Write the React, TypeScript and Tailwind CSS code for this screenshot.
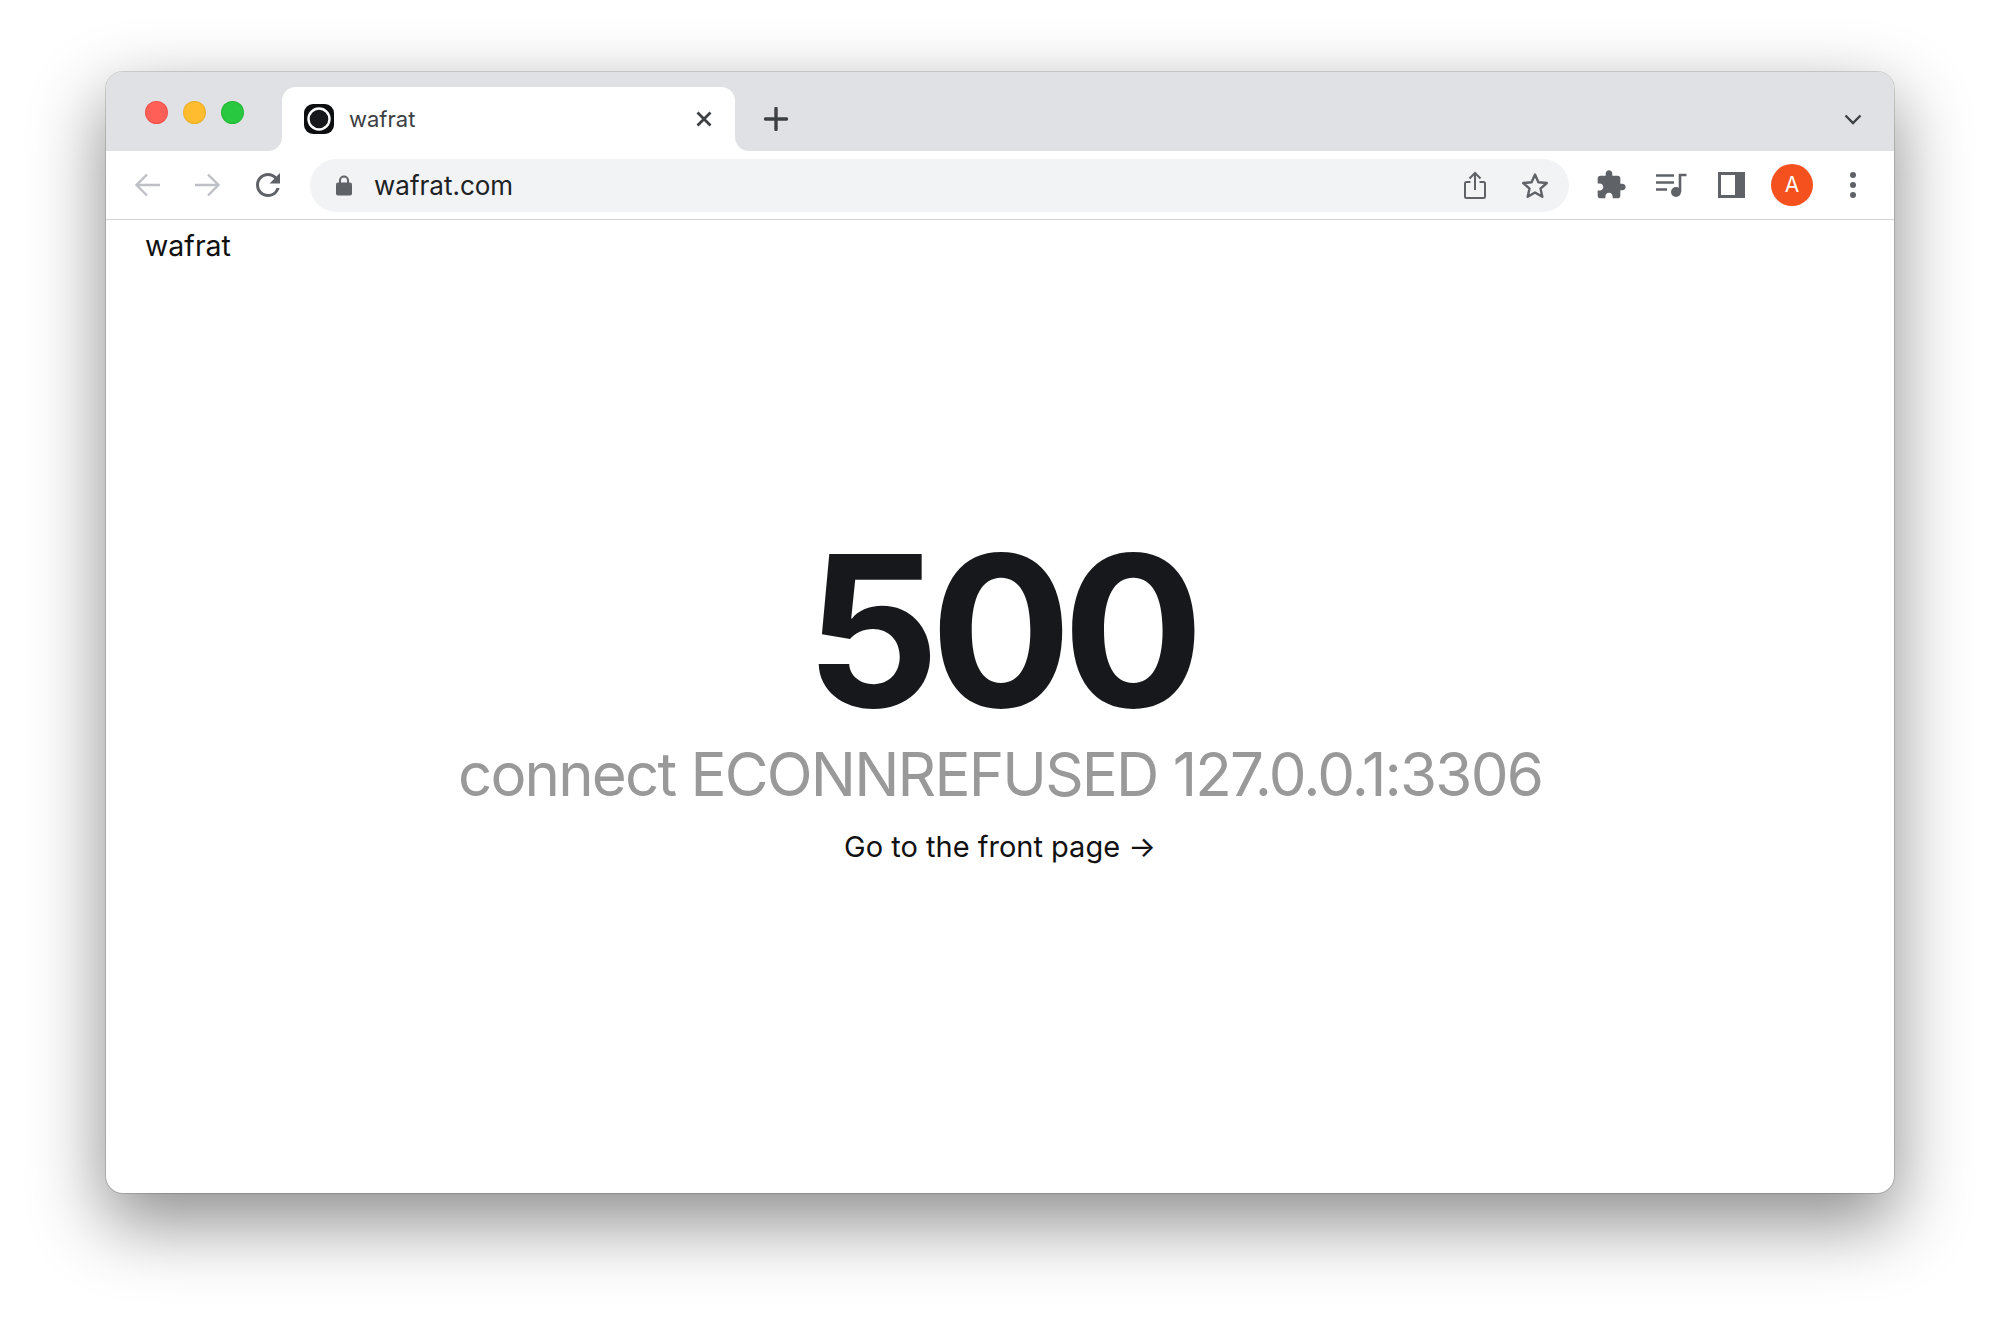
import React from 'react';

const TabCorner = ({ side }: { side: 'left' | 'right' }) => (
  <span
    className={
      side === 'left'
        ? 'absolute bottom-0 -left-[14px] w-[14px] h-[14px] bg-white'
        : 'absolute bottom-0 -right-[14px] w-[14px] h-[14px] bg-white'
    }
  >
    <span
      className={
        side === 'left'
          ? 'block w-full h-full bg-[#dfe1e5] rounded-br-[14px]'
          : 'block w-full h-full bg-[#dfe1e5] rounded-bl-[14px]'
      }
    />
  </span>
);

const TabBar = () => (
  <div className="flex items-end h-[79px] bg-[#dfe1e5] rounded-t-[17px] shrink-0">
    {/* Traffic lights */}
    <div className="flex items-center gap-[15px] w-[176px] pl-[39px] self-start pt-[29px]">
      <span className="w-[23px] h-[23px] rounded-full bg-[#ff5f57] border border-[#e0443e]/50" />
      <span className="w-[23px] h-[23px] rounded-full bg-[#febc2e] border border-[#dea123]/50" />
      <span className="w-[23px] h-[23px] rounded-full bg-[#28c840] border border-[#1aab29]/50" />
    </div>

    {/* Active tab */}
    <div className="relative flex items-center w-[453px] h-[64px] bg-white rounded-t-[14px] pl-[22px] pr-[23px]">
      <TabCorner side="left" />
      <TabCorner side="right" />
      <svg width="30" height="30" viewBox="0 0 30 30" className="shrink-0">
        <rect width="30" height="30" rx="9" fill="#0d0e10" />
        <circle cx="15" cy="15" r="10.5" fill="#17181c" stroke="#ffffff" strokeWidth="2.4" />
      </svg>
      <span className="ml-[15px] text-[22px] text-[#3c4043] font-['Inter',sans-serif]">wafrat</span>
      <svg width="16" height="16" viewBox="0 0 16 16" className="ml-auto">
        <path d="M1.5 1.5l13 13M14.5 1.5l-13 13" stroke="#3c4043" strokeWidth="2.8" fill="none" />
      </svg>
    </div>

    <div className="self-center flex items-center justify-center ml-[29px] mt-[15px]">
      <svg width="24" height="24" viewBox="0 0 24 24">
        <path d="M12 1.5v21M1.5 12h21" stroke="#3c4043" strokeWidth="3.4" strokeLinecap="round" fill="none" />
      </svg>
    </div>

    <div className="ml-auto mr-[32px] self-center mt-[16px]">
      <svg width="18" height="11" viewBox="0 0 18 11" className="block">
        <path d="M1.5 1.5L9 9l7.5-7.5" stroke="#3c4043" strokeWidth="2.4" fill="none" />
      </svg>
    </div>
  </div>
);

const Toolbar = () => (
  <div className="flex items-center h-[69px] pl-[28px] pr-[31px] bg-white border-b border-[#d3d4d6] shrink-0">
    <svg width="27" height="26" viewBox="0 0 27 26" className="shrink-0">
      <path d="M26 13H3M13 2.5L2.5 13 13 23.5" stroke="#bdc0c4" strokeWidth="2.4" fill="none" />
    </svg>
    <svg width="27" height="26" viewBox="0 0 27 26" className="ml-[33px] shrink-0">
      <path d="M1 13h23M14 2.5L24.5 13 14 23.5" stroke="#bdc0c4" strokeWidth="2.4" fill="none" />
    </svg>
    <svg width="36" height="36" viewBox="0 0 24 24" className="ml-[29px] shrink-0" fill="#5f6368">
      <path d="M17.65 6.35A7.958 7.958 0 0 0 12 4c-4.42 0-7.99 3.58-7.99 8s3.57 8 7.99 8c3.73 0 6.84-2.55 7.73-6h-2.08A5.99 5.99 0 0 1 12 18c-3.31 0-6-2.69-6-6s2.69-6 6-6c1.66 0 3.14.69 4.22 1.78L13 11h7V4l-2.35 2.35z" />
    </svg>

    {/* Omnibox */}
    <div className="flex items-center ml-[24px] w-[1259px] h-[53px] rounded-full bg-[#f1f3f4] pl-[26px] pr-[19px] shrink-0">
      <svg width="16" height="21" viewBox="0 0 16 21" className="shrink-0">
        <path d="M4 9V5.5a4 4 0 0 1 8 0V9" stroke="#5f6368" strokeWidth="2" fill="none" />
        <rect y="7.5" width="16" height="13" rx="2" fill="#5f6368" />
      </svg>
      <span className="ml-[22px] pt-[1px] text-[26px] text-[#202124] font-['Inter',sans-serif]">wafrat.com</span>
      <svg width="24" height="29" viewBox="0 0 24 29" className="ml-auto shrink-0">
        <path
          d="M7.5 11H3.5a1.5 1.5 0 0 0-1.5 1.5v13A1.5 1.5 0 0 0 3.5 27h17a1.5 1.5 0 0 0 1.5-1.5v-13a1.5 1.5 0 0 0-1.5-1.5h-4M12 19V2M6.5 7.5L12 2l5.5 5.5"
          stroke="#5f6368"
          strokeWidth="2"
          fill="none"
        />
      </svg>
      <svg width="30" height="28" viewBox="0 0 30 28" className="ml-[33px] shrink-0">
        <path
          d="M15 3.5l3.4 7.7 8.4.8-6.3 5.6 1.8 8.2L15 21.5l-7.3 4.3 1.8-8.2L3.2 12l8.4-.8z"
          stroke="#5f6368"
          strokeWidth="2.4"
          strokeLinejoin="round"
          fill="none"
        />
      </svg>
    </div>

    {/* Extensions and profile */}
    <svg width="32" height="32" viewBox="0 0 24 24" className="ml-[26px] shrink-0" fill="#5f6368">
      <path d="M20.5 11H19V7c0-1.1-.9-2-2-2h-4V3.5C13 2.12 11.88 1 10.5 1S8 2.12 8 3.5V5H4c-1.1 0-1.99.9-1.99 2v3.8H3.5c1.49 0 2.7 1.21 2.7 2.7s-1.21 2.7-2.7 2.7H2V20c0 1.1.9 2 2 2h3.8v-1.5c0-1.49 1.21-2.7 2.7-2.7 1.49 0 2.7 1.21 2.7 2.7V22H17c1.1 0 2-.9 2-2v-4h1.5c1.38 0 2.5-1.12 2.5-2.5S21.88 11 20.5 11z" />
    </svg>
    <svg width="31" height="24" viewBox="0 0 31 24" className="ml-[29px] shrink-0">
      <path d="M0 2.5h18M0 9.5h18M0 16.5h11" stroke="#5f6368" strokeWidth="2.6" fill="none" />
      <path d="M24 19V2h6.5" stroke="#5f6368" strokeWidth="2.6" fill="none" />
      <circle cx="20" cy="19" r="5" fill="#5f6368" />
    </svg>
    <div className="ml-[31px] flex w-[27px] h-[26px] bg-[#5f6368] p-[3px] pr-[10px] shrink-0">
      <span className="block w-full h-full bg-white" />
    </div>
    <div className="ml-[26px] flex items-center justify-center w-[42px] h-[42px] rounded-full bg-[#f4511e] text-white text-[21px] font-['Inter',sans-serif] shrink-0">
      A
    </div>
    <div className="ml-[37px] flex flex-col gap-[4px] shrink-0">
      <span className="w-[6px] h-[6px] rounded-full bg-[#5f6368]" />
      <span className="w-[6px] h-[6px] rounded-full bg-[#5f6368]" />
      <span className="w-[6px] h-[6px] rounded-full bg-[#5f6368]" />
    </div>
  </div>
);

const ErrorPage = () => (
  <div className="flex flex-col flex-1 min-h-0 font-['Inter',sans-serif]">
    <div className="pl-[39px] pt-[4px] text-[28.5px] leading-[44px] text-[#111]">wafrat</div>
    <div className="flex flex-col items-center mt-[259px]">
      <div className="text-[210px] leading-[208px] font-bold tracking-[-0.045em] text-[#17181c]">500</div>
      <div className="mt-[3px] text-[60px] leading-[72px] tracking-[-0.03em] text-[#999999]">
        connect ECONNREFUSED 127.0.0.1:3306
      </div>
      <a className="mt-[17px] text-[29px] leading-[40px] text-[#111]">Go to the front page →</a>
    </div>
  </div>
);

export default function App() {
  return (
    <div className="w-[2000px] h-[1333px] bg-white pt-[72px] overflow-hidden">
      <div className="mx-auto flex flex-col w-[1788px] h-[1121px] bg-white rounded-[17px] shadow-[0_0_0_1px_rgba(0,0,0,0.14),0_28px_72px_2px_rgba(0,0,0,0.45)]">
        <TabBar />
        <Toolbar />
        <ErrorPage />
      </div>
    </div>
  );
}
